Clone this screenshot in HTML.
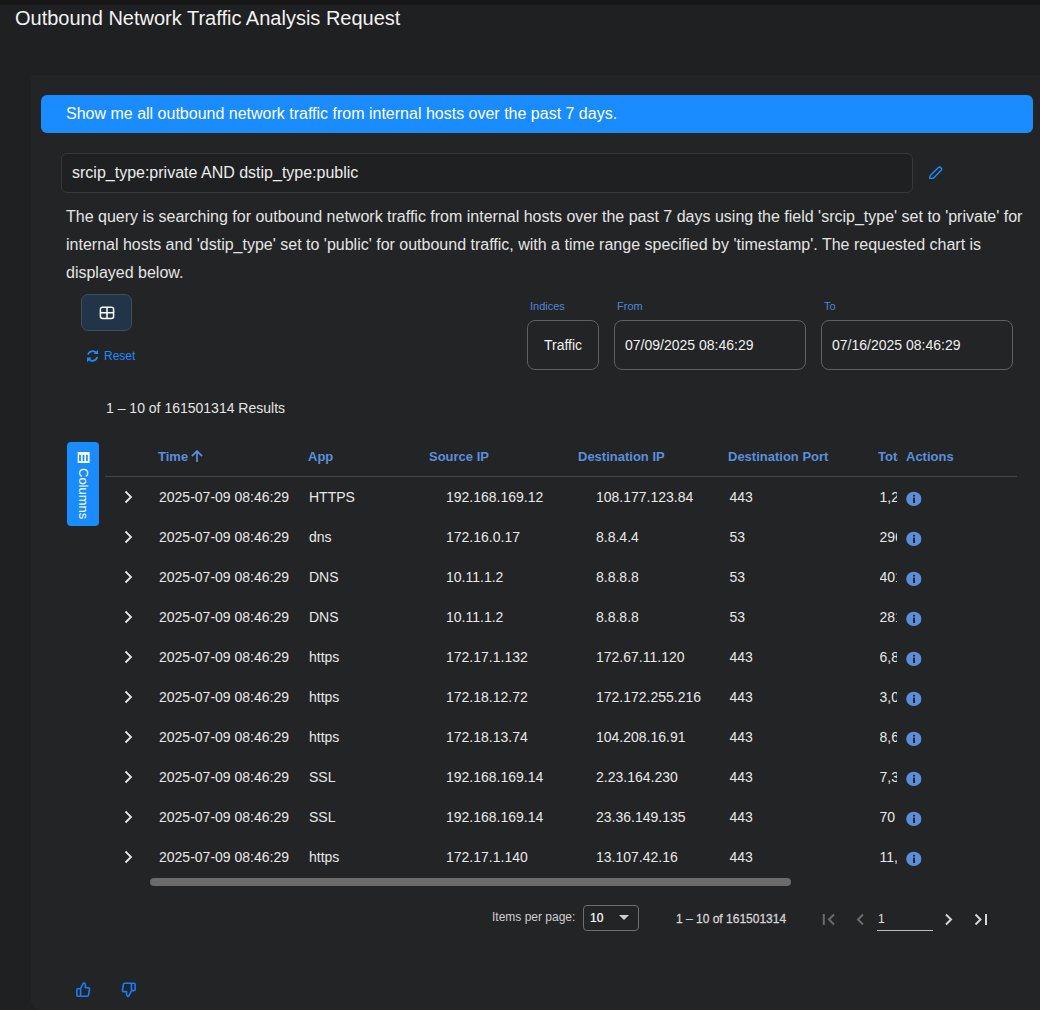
<!DOCTYPE html>
<html><head><meta charset="utf-8">
<style>
*{box-sizing:border-box;margin:0;padding:0}
html,body{width:1040px;height:1010px;overflow:hidden;background:#1f2022;font-family:"Liberation Sans",sans-serif;color:#e8e8e8}
.abs{position:absolute}
#strip{position:absolute;left:0;top:0;width:1040px;height:5px;background:#171717}
#title{position:absolute;left:15px;top:6px;font-size:20px;line-height:24px;color:#f2f2f2;white-space:nowrap}
#panel{position:absolute;left:31px;top:75px;width:1020px;height:935px;background:#232426;border-radius:4px 4px 9px 9px}
#ask{position:absolute;left:41px;top:95px;width:992px;height:38px;background:#1a8cff;border-radius:6px}
#ask span{position:absolute;left:25px;top:9px;font-size:16px;line-height:20px;color:#fff;white-space:nowrap}
#query{position:absolute;left:61px;top:153px;width:852px;height:40px;background:#1f2022;border:1px solid #37383a;border-radius:6px}
#query span{position:absolute;left:10px;top:9px;font-size:16px;line-height:20px;color:#ececec;white-space:nowrap}
#pencil{position:absolute;left:928px;top:165px}
#para{position:absolute;left:66px;top:203px;width:970px;font-size:16px;line-height:28px;color:#e4e4e4}
#gridbtn{position:absolute;left:81px;top:294px;width:51px;height:37px;background:#223447;border:1px solid #3c4e60;border-radius:7px}
#gridbtn svg{position:absolute;left:17px;top:11px}
#reset{position:absolute;left:86px;top:348px;height:16px;white-space:nowrap;color:#1a8cff;font-size:12px;line-height:16px}
#reset svg{position:absolute;left:0;top:0}
#reset span{position:absolute;left:18px;top:0}
.lbl{position:absolute;top:299px;font-size:11px;line-height:14px;color:#4f86d8;white-space:nowrap}
.box{position:absolute;top:320px;height:50px;border:1px solid #5f6063;border-radius:8px;background:#232426}
.box span{position:absolute;top:15px;font-size:14px;line-height:18px;color:#f0f0f0;white-space:nowrap}
#results{position:absolute;left:106px;top:399px;font-size:14px;line-height:18px;color:#e4e4e4;white-space:nowrap}
#colbtn{position:absolute;left:67px;top:442px;width:32px;height:84px;background:#1a8cff;border-radius:4px}
#colbtn svg{position:absolute;left:10px;top:10px}
#colbtn span{position:absolute;left:9px;top:26px;writing-mode:vertical-rl;font-size:13px;line-height:14px;color:#fff;white-space:nowrap}
#hline{position:absolute;left:105px;top:476px;width:912px;height:1px;background:#48494b}
.h{position:absolute;top:449px;font-size:13px;line-height:16px;font-weight:bold;color:#5b8fdc;white-space:nowrap}
.row{position:absolute;left:0;width:1040px;height:40px}
.row .c{position:absolute;top:11px;font-size:14px;line-height:18px;color:#e8e8e8;white-space:nowrap}
.row .tot{width:17px;overflow:hidden}
.chev{position:absolute;left:122px;top:13px}
.info{position:absolute;left:906px;top:14px}
#scroll{position:absolute;left:150px;top:878px;width:641px;height:8px;background:#6b6b6c;border-radius:4px}
#ipp{position:absolute;left:492px;top:909px;font-size:12px;line-height:16px;color:#cfcfcf;white-space:nowrap}
#sel{position:absolute;left:583px;top:905px;width:56px;height:26px;border:1px solid #6e6e70;border-radius:4px}
#sel span{position:absolute;left:6px;top:4px;font-size:12px;line-height:16px;color:#fff;-webkit-text-stroke:0.2px #fff}
#sel svg{position:absolute;left:35px;top:9px}
#range{position:absolute;left:676px;top:911px;font-size:12px;line-height:16px;color:#d4d4d4;white-space:nowrap;-webkit-text-stroke:0.3px #d4d4d4}
#pg1{position:absolute;left:878px;top:911px;font-size:12px;line-height:16px;color:#e0e0e0}
#pgline{position:absolute;left:877px;top:930px;width:56px;height:1px;background:#bdbdbd}
.pgi{position:absolute;top:913px}
#thumbs{position:absolute;left:76px;top:982px}
</style></head><body>
<div id="strip"></div>
<div id="title">Outbound Network Traffic Analysis Request</div>
<div id="panel"></div>
<div id="ask"><span>Show me all outbound network traffic from internal hosts over the past 7 days.</span></div>
<div id="query"><span>srcip_type:private AND dstip_type:public</span></div>
<svg id="pencil" width="16" height="16" viewBox="0 0 16 16"><path d="M1.6 13.3 L2.3 10.6 L10.2 2.7 A1.98 1.98 0 0 1 13.0 5.5 L5.1 13.4 Z" fill="none" stroke="#1a8cff" stroke-width="1.4" stroke-linejoin="round"/></svg>
<div id="para">The query is searching for outbound network traffic from internal hosts over the past 7 days using the field 'srcip_type' set to 'private' for internal hosts and 'dstip_type' set to 'public' for outbound traffic, with a time range specified by 'timestamp'. The requested chart is displayed below.</div>
<div id="gridbtn"><svg width="16" height="14" viewBox="0 0 16 14"><rect x="1.4" y="1.2" width="13.2" height="11.2" rx="2.2" fill="none" stroke="#fff" stroke-width="1.5"/><path d="M8 1.2 V12.4 M1.4 6.8 H14.6" stroke="#fff" stroke-width="1.5"/></svg></div>
<div id="reset"><svg width="14" height="16" viewBox="0 0 14 16"><g fill="none" stroke="#1a8cff" stroke-width="1.8"><path d="M1.94 6.5 A4.8 4.8 0 0 1 10.25 5"/><path d="M11.19 9 A4.8 4.8 0 0 1 2.75 11"/></g><path d="M12.1 1.7 V6.1 H7.7 Z M1 14.2 V9.5 H5.5 Z" fill="#1a8cff"/></svg><span>Reset</span></div>
<div class="lbl" style="left:530px">Indices</div>
<div class="lbl" style="left:617px">From</div>
<div class="lbl" style="left:824px">To</div>
<div class="box" style="left:527px;width:72px"><span style="left:16px">Traffic</span></div>
<div class="box" style="left:614px;width:192px"><span style="left:10px">07/09/2025 08:46:29</span></div>
<div class="box" style="left:821px;width:192px"><span style="left:10px">07/16/2025 08:46:29</span></div>
<div id="results">1 – 10 of 161501314 Results</div>
<div id="colbtn"><svg width="14" height="14" viewBox="0 0 14 14"><path fill="#fff" fill-rule="evenodd" d="M0.7 0 H12.6 V11 H0.7 Z M2.1 2.8 V9 H3.9 V2.8 Z M5.6 2.8 V9 H7.4 V2.8 Z M9.1 2.8 V9 H10.8 V2.8 Z"/></svg><span>Columns</span></div>
<div class="h" style="left:158px">Time</div><svg class="abs" style="left:191px;top:450px" width="12" height="12" viewBox="0 0 12 12"><path d="M6 12 V1.2 M0.9 6.2 L6 1.1 L11.1 6.2" fill="none" stroke="#5b8fdc" stroke-width="1.7"/></svg>
<div class="h" style="left:308px">App</div>
<div class="h" style="left:429px">Source IP</div>
<div class="h" style="left:578px">Destination IP</div>
<div class="h" style="left:728px">Destination Port</div>
<div class="h" style="left:878px;width:20px;overflow:hidden">Total</div>
<div class="h" style="left:906px">Actions</div>
<div id="hline"></div>
<div class="row" style="top:477px">
<svg class="chev" width="12" height="14" viewBox="0 0 12 14"><path d="M3.5 1.5 L9 7 L3.5 12.5" fill="none" stroke="#e6e6e6" stroke-width="1.8"/></svg>
<span class="c" style="left:159px">2025-07-09 08:46:29</span>
<span class="c" style="left:309px">HTTPS</span>
<span class="c" style="left:446px">192.168.169.12</span>
<span class="c" style="left:596px">108.177.123.84</span>
<span class="c" style="left:729.5px">443</span>
<span class="c tot" style="left:879.5px">1,234,567</span>
<svg class="info" width="16" height="16" viewBox="0 0 16 16"><ellipse cx="7.8" cy="7.9" rx="7.6" ry="7.2" fill="#5b8fdc"/><rect x="7" y="6.6" width="2" height="5.4" fill="#232426"/><rect x="7" y="3.8" width="2" height="1.8" fill="#232426"/></svg>
</div>
<div class="row" style="top:517px">
<svg class="chev" width="12" height="14" viewBox="0 0 12 14"><path d="M3.5 1.5 L9 7 L3.5 12.5" fill="none" stroke="#e6e6e6" stroke-width="1.8"/></svg>
<span class="c" style="left:159px">2025-07-09 08:46:29</span>
<span class="c" style="left:309px">dns</span>
<span class="c" style="left:446px">172.16.0.17</span>
<span class="c" style="left:596px">8.8.4.4</span>
<span class="c" style="left:729.5px">53</span>
<span class="c tot" style="left:879.5px">29654</span>
<svg class="info" width="16" height="16" viewBox="0 0 16 16"><ellipse cx="7.8" cy="7.9" rx="7.6" ry="7.2" fill="#5b8fdc"/><rect x="7" y="6.6" width="2" height="5.4" fill="#232426"/><rect x="7" y="3.8" width="2" height="1.8" fill="#232426"/></svg>
</div>
<div class="row" style="top:557px">
<svg class="chev" width="12" height="14" viewBox="0 0 12 14"><path d="M3.5 1.5 L9 7 L3.5 12.5" fill="none" stroke="#e6e6e6" stroke-width="1.8"/></svg>
<span class="c" style="left:159px">2025-07-09 08:46:29</span>
<span class="c" style="left:309px">DNS</span>
<span class="c" style="left:446px">10.11.1.2</span>
<span class="c" style="left:596px">8.8.8.8</span>
<span class="c" style="left:729.5px">53</span>
<span class="c tot" style="left:879.5px">40123</span>
<svg class="info" width="16" height="16" viewBox="0 0 16 16"><ellipse cx="7.8" cy="7.9" rx="7.6" ry="7.2" fill="#5b8fdc"/><rect x="7" y="6.6" width="2" height="5.4" fill="#232426"/><rect x="7" y="3.8" width="2" height="1.8" fill="#232426"/></svg>
</div>
<div class="row" style="top:597px">
<svg class="chev" width="12" height="14" viewBox="0 0 12 14"><path d="M3.5 1.5 L9 7 L3.5 12.5" fill="none" stroke="#e6e6e6" stroke-width="1.8"/></svg>
<span class="c" style="left:159px">2025-07-09 08:46:29</span>
<span class="c" style="left:309px">DNS</span>
<span class="c" style="left:446px">10.11.1.2</span>
<span class="c" style="left:596px">8.8.8.8</span>
<span class="c" style="left:729.5px">53</span>
<span class="c tot" style="left:879.5px">28123</span>
<svg class="info" width="16" height="16" viewBox="0 0 16 16"><ellipse cx="7.8" cy="7.9" rx="7.6" ry="7.2" fill="#5b8fdc"/><rect x="7" y="6.6" width="2" height="5.4" fill="#232426"/><rect x="7" y="3.8" width="2" height="1.8" fill="#232426"/></svg>
</div>
<div class="row" style="top:637px">
<svg class="chev" width="12" height="14" viewBox="0 0 12 14"><path d="M3.5 1.5 L9 7 L3.5 12.5" fill="none" stroke="#e6e6e6" stroke-width="1.8"/></svg>
<span class="c" style="left:159px">2025-07-09 08:46:29</span>
<span class="c" style="left:309px">https</span>
<span class="c" style="left:446px">172.17.1.132</span>
<span class="c" style="left:596px">172.67.11.120</span>
<span class="c" style="left:729.5px">443</span>
<span class="c tot" style="left:879.5px">6,812</span>
<svg class="info" width="16" height="16" viewBox="0 0 16 16"><ellipse cx="7.8" cy="7.9" rx="7.6" ry="7.2" fill="#5b8fdc"/><rect x="7" y="6.6" width="2" height="5.4" fill="#232426"/><rect x="7" y="3.8" width="2" height="1.8" fill="#232426"/></svg>
</div>
<div class="row" style="top:677px">
<svg class="chev" width="12" height="14" viewBox="0 0 12 14"><path d="M3.5 1.5 L9 7 L3.5 12.5" fill="none" stroke="#e6e6e6" stroke-width="1.8"/></svg>
<span class="c" style="left:159px">2025-07-09 08:46:29</span>
<span class="c" style="left:309px">https</span>
<span class="c" style="left:446px">172.18.12.72</span>
<span class="c" style="left:596px">172.172.255.216</span>
<span class="c" style="left:729.5px">443</span>
<span class="c tot" style="left:879.5px">3,012</span>
<svg class="info" width="16" height="16" viewBox="0 0 16 16"><ellipse cx="7.8" cy="7.9" rx="7.6" ry="7.2" fill="#5b8fdc"/><rect x="7" y="6.6" width="2" height="5.4" fill="#232426"/><rect x="7" y="3.8" width="2" height="1.8" fill="#232426"/></svg>
</div>
<div class="row" style="top:717px">
<svg class="chev" width="12" height="14" viewBox="0 0 12 14"><path d="M3.5 1.5 L9 7 L3.5 12.5" fill="none" stroke="#e6e6e6" stroke-width="1.8"/></svg>
<span class="c" style="left:159px">2025-07-09 08:46:29</span>
<span class="c" style="left:309px">https</span>
<span class="c" style="left:446px">172.18.13.74</span>
<span class="c" style="left:596px">104.208.16.91</span>
<span class="c" style="left:729.5px">443</span>
<span class="c tot" style="left:879.5px">8,612</span>
<svg class="info" width="16" height="16" viewBox="0 0 16 16"><ellipse cx="7.8" cy="7.9" rx="7.6" ry="7.2" fill="#5b8fdc"/><rect x="7" y="6.6" width="2" height="5.4" fill="#232426"/><rect x="7" y="3.8" width="2" height="1.8" fill="#232426"/></svg>
</div>
<div class="row" style="top:757px">
<svg class="chev" width="12" height="14" viewBox="0 0 12 14"><path d="M3.5 1.5 L9 7 L3.5 12.5" fill="none" stroke="#e6e6e6" stroke-width="1.8"/></svg>
<span class="c" style="left:159px">2025-07-09 08:46:29</span>
<span class="c" style="left:309px">SSL</span>
<span class="c" style="left:446px">192.168.169.14</span>
<span class="c" style="left:596px">2.23.164.230</span>
<span class="c" style="left:729.5px">443</span>
<span class="c tot" style="left:879.5px">7,312</span>
<svg class="info" width="16" height="16" viewBox="0 0 16 16"><ellipse cx="7.8" cy="7.9" rx="7.6" ry="7.2" fill="#5b8fdc"/><rect x="7" y="6.6" width="2" height="5.4" fill="#232426"/><rect x="7" y="3.8" width="2" height="1.8" fill="#232426"/></svg>
</div>
<div class="row" style="top:797px">
<svg class="chev" width="12" height="14" viewBox="0 0 12 14"><path d="M3.5 1.5 L9 7 L3.5 12.5" fill="none" stroke="#e6e6e6" stroke-width="1.8"/></svg>
<span class="c" style="left:159px">2025-07-09 08:46:29</span>
<span class="c" style="left:309px">SSL</span>
<span class="c" style="left:446px">192.168.169.14</span>
<span class="c" style="left:596px">23.36.149.135</span>
<span class="c" style="left:729.5px">443</span>
<span class="c tot" style="left:879.5px">70</span>
<svg class="info" width="16" height="16" viewBox="0 0 16 16"><ellipse cx="7.8" cy="7.9" rx="7.6" ry="7.2" fill="#5b8fdc"/><rect x="7" y="6.6" width="2" height="5.4" fill="#232426"/><rect x="7" y="3.8" width="2" height="1.8" fill="#232426"/></svg>
</div>
<div class="row" style="top:837px">
<svg class="chev" width="12" height="14" viewBox="0 0 12 14"><path d="M3.5 1.5 L9 7 L3.5 12.5" fill="none" stroke="#e6e6e6" stroke-width="1.8"/></svg>
<span class="c" style="left:159px">2025-07-09 08:46:29</span>
<span class="c" style="left:309px">https</span>
<span class="c" style="left:446px">172.17.1.140</span>
<span class="c" style="left:596px">13.107.42.16</span>
<span class="c" style="left:729.5px">443</span>
<span class="c tot" style="left:879.5px">11,234</span>
<svg class="info" width="16" height="16" viewBox="0 0 16 16"><ellipse cx="7.8" cy="7.9" rx="7.6" ry="7.2" fill="#5b8fdc"/><rect x="7" y="6.6" width="2" height="5.4" fill="#232426"/><rect x="7" y="3.8" width="2" height="1.8" fill="#232426"/></svg>
</div>
<div id="scroll"></div>
<div id="ipp">Items per page:</div>
<div id="sel"><span>10</span><svg width="10" height="6" viewBox="0 0 10 6"><path d="M0 0 H10 L5 5 Z" fill="#cfcfcf"/></svg></div>
<div id="range">1 – 10 of 161501314</div>
<svg class="pgi" style="left:820px" width="18" height="14" viewBox="0 0 18 14"><path d="M3.8 1 V12" stroke="#6b6b6b" stroke-width="2"/><path d="M14 1.5 L9 6.5 L14 11.5" fill="none" stroke="#6b6b6b" stroke-width="2"/></svg>
<svg class="pgi" style="left:852px" width="14" height="14" viewBox="0 0 14 14"><path d="M11 1.5 L6 6.5 L11 11.5" fill="none" stroke="#6b6b6b" stroke-width="2"/></svg>
<div id="pg1">1</div>
<div id="pgline"></div>
<svg class="pgi" style="left:942px" width="14" height="14" viewBox="0 0 14 14"><path d="M4 1.5 L9 6.5 L4 11.5" fill="none" stroke="#d6d6d6" stroke-width="2"/></svg>
<svg class="pgi" style="left:972px" width="18" height="14" viewBox="0 0 18 14"><path d="M3.5 1.5 L8.5 6.5 L3.5 11.5" fill="none" stroke="#d6d6d6" stroke-width="2"/><path d="M14 1 V12" stroke="#d6d6d6" stroke-width="2"/></svg>
<svg id="thumbs" width="62" height="17" viewBox="0 0 62 17">
<g fill="none" stroke="#1a7cff" stroke-width="1.6" stroke-linejoin="round">
<rect x="0.9" y="6.8" width="3.7" height="7.4" rx="1"/><path d="M4.6 6.6 L7.0 1.7 Q7.6 0.8 8.5 1.2 Q9.4 1.7 9.4 2.8 V5.8 H12.5 Q13.8 5.9 13.5 7.2 L12.5 13.2 Q12.3 14.2 11.4 14.2 H4.6"/>
</g>
<g transform="translate(60,15.4) rotate(180)" fill="none" stroke="#1a7cff" stroke-width="1.6" stroke-linejoin="round"><rect x="0.9" y="6.8" width="3.7" height="7.4" rx="1"/><path d="M4.6 6.6 L7.0 1.7 Q7.6 0.8 8.5 1.2 Q9.4 1.7 9.4 2.8 V5.8 H12.5 Q13.8 5.9 13.5 7.2 L12.5 13.2 Q12.3 14.2 11.4 14.2 H4.6"/></g>
</svg>
</body></html>
